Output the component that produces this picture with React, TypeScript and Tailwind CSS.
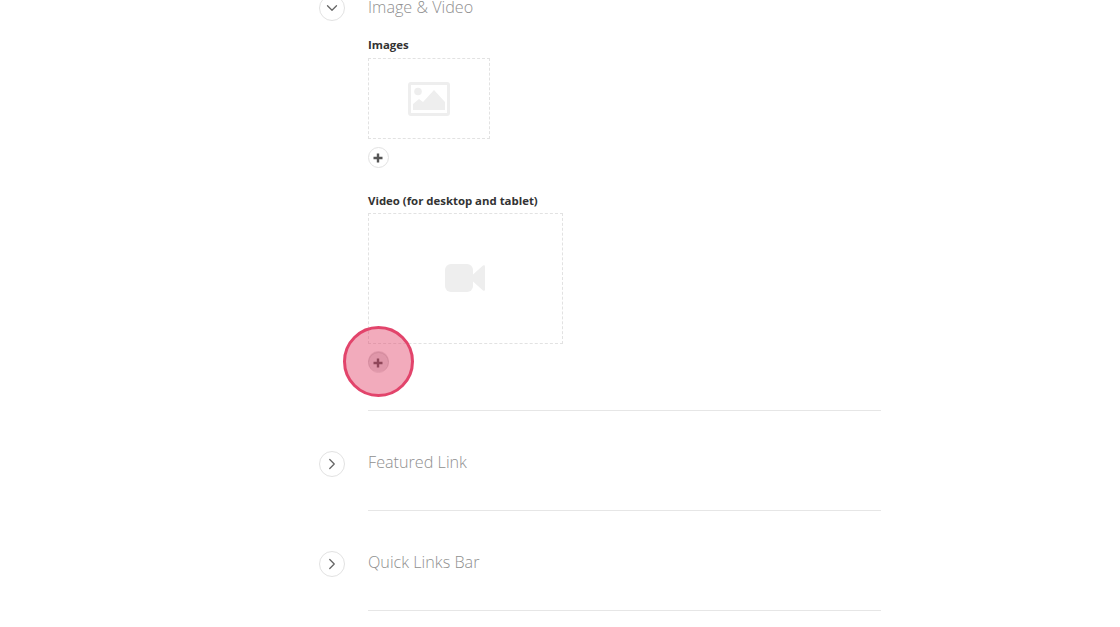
import { ChevronDown, ChevronRight } from "lucide-react";

const font = "font-['Open_Sans',sans-serif]";

const Toggle = ({ open }: { open?: boolean }) => (
  <div className="w-[26px] h-[26px] rounded-full border border-[#e2e2e2] bg-white flex items-center justify-center text-[#666]">
    {open ? <ChevronDown size={18} strokeWidth={1.7} /> : <ChevronRight size={18} strokeWidth={1.7} />}
  </div>
);

const AddButton = () => (
  <div className="w-[21px] h-[21px] pr-[1px] rounded-full border border-[#e2e2e2] bg-white flex items-center justify-center">
    <svg width="10" height="10" viewBox="0 0 10 10">
      <path d="M5 0.5v9M0.5 5h9" stroke="#555" strokeWidth="2.4" />
    </svg>
  </div>
);

const Collapsed = ({ title }: { title: string }) => (
  <section className="flex">
    <div className="w-[49px] pt-[40px] shrink-0">
      <Toggle />
    </div>
    <div className="w-[513px] h-[100px] border-b border-[#e6e6e6] pt-[37px]">
      <h2 className="text-[16.2px] leading-[28px] font-light text-[#8f8f8f]">{title}</h2>
    </div>
  </section>
);

export default function App() {
  return (
    <div className={`relative h-[627px] w-[1120px] overflow-hidden bg-white ${font}`}>
      <div className="pl-[319px] -mt-[5px]">
        <section className="flex">
          <div className="w-[49px] shrink-0">
            <Toggle open />
          </div>
          <div className="w-[513px] h-[416px] border-b border-[#e6e6e6]">
            <h2 className="text-[16.2px] leading-[24px] font-light text-[#8f8f8f]">Image &amp; Video</h2>
            <h3 className="mt-[17px] text-[11.4px] leading-[18px] font-bold text-[#333]">Images</h3>
            <div className="mt-[4px] w-[122px] h-[81px] border border-dashed border-[#e2e2e2] flex items-center justify-center">
              <svg width="42" height="34" viewBox="0 0 42 34">
                <rect x="1.5" y="1.5" width="39" height="31" rx="1.5" fill="none" stroke="#eeeeee" strokeWidth="3" />
                <circle cx="10" cy="9.5" r="3.8" fill="#eeeeee" />
                <path d="M5 28v-6l6-5 4 3 11-12 11 12v8z" fill="#eeeeee" />
              </svg>
            </div>
            <div className="mt-[8px]">
              <AddButton />
            </div>
            <h3 className="mt-[24px] text-[11.4px] leading-[18px] font-bold text-[#333]">Video (for desktop and tablet)</h3>
            <div className="mt-[3px] w-[195px] h-[131px] pb-[2px] pr-[1px] border border-dashed border-[#e2e2e2] flex items-center justify-center">
              <svg width="40" height="28" viewBox="0 0 40 28">
                <rect x="0" y="0" width="28" height="28" rx="6" fill="#eeeeee" />
                <path d="M28 10.5 38 1.5q2-1 2 1v23q0 2-2 1L28 17.5z" fill="#eeeeee" />
              </svg>
            </div>
            <div className="mt-[8px]">
              <AddButton />
            </div>
          </div>
        </section>
        <Collapsed title="Featured Link" />
        <Collapsed title="Quick Links Bar" />
      </div>
      <div className="absolute left-[343px] top-[326px] w-[71px] h-[71px] pr-[1px] rounded-full border-[3px] border-[#e2446b] bg-[#e2446b]/45 flex items-center justify-center">
        <div className="w-[21px] h-[21px] rounded-full bg-[#7a2a40]/15" />
      </div>
    </div>
  );
}
